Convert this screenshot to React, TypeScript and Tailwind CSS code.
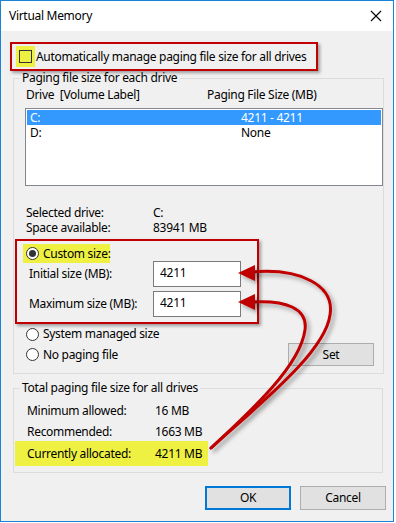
const font = { fontFamily: '"Noto Sans", "Open Sans", sans-serif' };

function Radio({ checked = false }: { checked?: boolean }) {
  return (
    <span className="w-[13px] h-[13px] rounded-full border border-[#333] bg-white flex items-center justify-center shrink-0">
      {checked && <span className="w-[7px] h-[7px] rounded-full bg-[#333]" />}
    </span>
  );
}

export default function App() {
  return (
    <div className="w-[396px] h-[523px] bg-white text-[12px] tracking-[-0.3px] whitespace-nowrap text-black" style={font}>
      <div className="relative w-[394px] h-[522px] border border-[#1883d7] bg-[#f0f0f0] flex flex-col">
        {/* title bar */}
        <div className="h-[30px] bg-white flex items-center justify-between pl-[8px] pr-[11px] shrink-0">
          <span className="leading-[16px]">Virtual Memory</span>
          <svg width="12" height="12" viewBox="0 0 12 12">
            <path d="M1 1 L11 11 M11 1 L1 11" stroke="#000" strokeWidth="1.1" />
          </svg>
        </div>

        {/* auto manage checkbox */}
        <div className="mt-[11px] ml-[9px] w-[308px] h-[29px] border-2 border-[#c00000] shadow-[2px_2px_3px_rgba(0,0,0,0.35)] flex items-center">
          <div className="ml-[4px] w-[19px] h-[21px] bg-[#eef142] flex items-center justify-center">
            <span className="w-[13px] h-[13px] border border-[#333] bg-transparent" />
          </div>
          <span className="ml-px leading-[16px]">Automatically manage paging file size for all drives</span>
        </div>

        {/* group: each drive */}
        <fieldset className="ml-[12px] w-[370px] border border-[#dcdcdc] pb-[7px] -mt-px">
          <legend className="ml-[6px] px-[2px] leading-[16px]">Paging file size for each drive</legend>
          <div className="mt-px h-[16px] flex items-center leading-[16px] pl-[12px]">
            <span className="w-[181px]">Drive&nbsp; [Volume Label]</span>
            <span>Paging File Size (MB)</span>
          </div>
          <div className="mt-[5px] ml-[11px] w-[358px] h-[78px] border border-[#828790] bg-white p-px">
            <div className="h-[15px] bg-[#3399ff] text-white flex items-center leading-[14px] pl-[3px]">
              <span className="w-[211px]">C:</span>
              <span>4211 - 4211</span>
            </div>
            <div className="h-[15px] flex items-center leading-[14px] pl-[3px]">
              <span className="w-[211px]">D:</span>
              <span>None</span>
            </div>
          </div>
          <div className="mt-[19px] pl-[12px] h-[15px] flex items-center leading-[14px]">
            <span className="w-[127px]">Selected drive:</span>
            <span>C:</span>
          </div>
          <div className="pl-[12px] h-[15px] flex items-center leading-[14px]">
            <span className="w-[127px]">Space available:</span>
            <span>83941 MB</span>
          </div>

          {/* custom size */}
          <div className="mt-[4px] ml-px w-[244px] h-[85px] border-2 border-[#c00000] shadow-[2px_2px_3px_rgba(0,0,0,0.35)]">
            <div className="mt-[3px] ml-[6px] w-[87px] h-[19px] bg-[#eef142] flex items-center pl-[3px] gap-[4px]">
              <Radio checked />
              <span className="leading-[16px]">Custom size:</span>
            </div>
            <div className="-mt-[2px] h-[26px] flex items-center pl-[12px]">
              <span className="w-[124px] leading-[16px]">Initial size (MB):</span>
              <div className="w-[88px] h-[26px] border border-[#7a7a7a] bg-white pl-[6px] pb-[3px] flex items-center leading-[16px]">4211</div>
            </div>
            <div className="mt-[4px] h-[26px] flex items-center pl-[12px]">
              <span className="w-[124px] leading-[16px]">Maximum size (MB):</span>
              <div className="w-[88px] h-[26px] border border-[#7a7a7a] bg-white pl-[6px] pb-[3px] flex items-center leading-[16px]">4211</div>
            </div>
          </div>

          <div className="mt-[2px] pl-[12px] h-[16px] flex items-center gap-[4px] leading-[16px]">
            <Radio />
            <span>System managed size</span>
          </div>
          <div className="mt-px pl-[12px] pr-[9px] h-[23px] flex items-center gap-[4px] leading-[16px]">
            <Radio />
            <span>No paging file</span>
            <button className="ml-auto w-[86px] h-[23px] border border-[#adadad] bg-[#e1e1e1] text-black">Set</button>
          </div>
        </fieldset>

        {/* group: totals */}
        <fieldset className="mt-[6px] ml-[12px] w-[370px] border border-[#dcdcdc] pb-[6px]">
          <legend className="ml-[6px] px-[2px] leading-[16px]">Total paging file size for all drives</legend>
          <div className="mt-[7px] pl-[13px] h-[16px] flex items-center leading-[16px]">
            <span className="w-[128px]">Minimum allowed:</span>
            <span>16 MB</span>
          </div>
          <div className="mt-[5px] pl-[13px] h-[16px] flex items-center leading-[16px]">
            <span className="w-[128px]">Recommended:</span>
            <span>1663 MB</span>
          </div>
          <div className="mt-px ml-px w-[193px] h-[25px] bg-[#eef142] pl-[12px] flex items-center leading-[16px]">
            <span className="w-[128px]">Currently allocated:</span>
            <span>4211 MB</span>
          </div>
        </fieldset>

        {/* buttons */}
        <div className="mt-[13px] pr-[7px] flex justify-end gap-[9px]">
          <button className="w-[86px] h-[24px] border-2 border-[#0078d7] bg-[#e1e1e1] text-black">OK</button>
          <button className="w-[86px] h-[24px] border border-[#adadad] bg-[#e1e1e1] text-black">Cancel</button>
        </div>

        {/* annotation arrows */}
        <svg className="absolute -left-px -top-px pointer-events-none" width="396" height="523" viewBox="0 0 396 523">
          <defs>
            <filter id="sh" x="-20%" y="-20%" width="140%" height="140%">
              <feDropShadow dx="3" dy="3" stdDeviation="2" floodColor="#000" floodOpacity="0.35" />
            </filter>
          </defs>
          <g filter="url(#sh)" fill="none" stroke="#c00000" strokeWidth="3" strokeLinecap="round">
            <path d="M252 272 C300 268 335 285 330 315 C325 352 262 402 211 448" />
            <path d="M252 302 C285 300 308 308 305 330 C300 366 252 410 211 448" />
          </g>
          <g filter="url(#sh)" fill="#c00000">
            <polygon points="238,273 255,265 255,281" />
            <polygon points="238,302 255,294 255,310" />
          </g>
        </svg>
      </div>
    </div>
  );
}
